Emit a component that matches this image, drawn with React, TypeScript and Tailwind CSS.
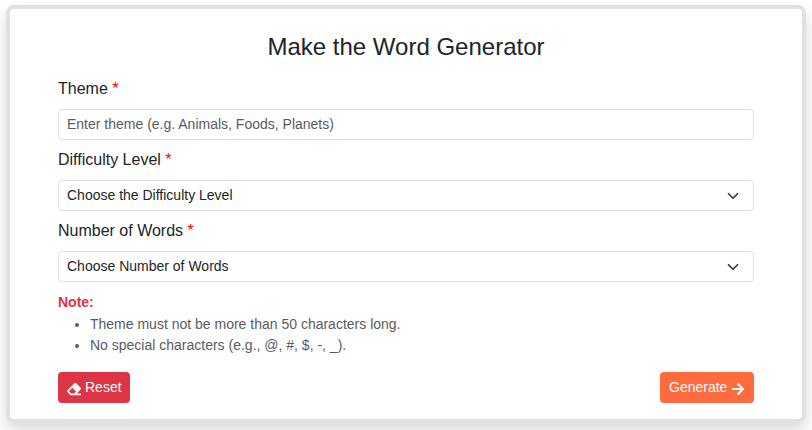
import { FaArrowRight, FaEraser } from "react-icons/fa";

function Label({ children }: { children: string }) {
  return (
    <label className="mb-2 block text-[16px] leading-6">
      {children} <span className="text-[#ff0000]">*</span>
    </label>
  );
}

function Select({ text }: { text: string }) {
  return (
    <div className="mb-2 flex h-[31px] items-center justify-between rounded-[4px] border border-[#dee2e6] pr-3 pl-2 text-[14px]">
      <span>{text}</span>
      <svg className="h-3 w-4" viewBox="0 0 16 16" fill="none">
        <path d="m2 5 6 6 6-6" stroke="#343a40" strokeWidth="2.3" strokeLinecap="round" strokeLinejoin="round" />
      </svg>
    </div>
  );
}

export default function App() {
  return (
    <div className="h-[430px] overflow-hidden bg-white px-[6px] pt-[5px] font-['Liberation_Sans',Arial,sans-serif] text-[#212529]">
      <div className="h-[418px] rounded-[8px] border-4 border-[#dee2e6] px-12 pt-[22px] shadow-[0_8px_16px_rgba(0,0,0,0.15)]">
        <h1 className="mb-[15px] text-center text-[24px] leading-[31px]">Make the Word Generator</h1>
        <Label>Theme</Label>
        <input
          className="mb-2 block h-[31px] w-full rounded-[4px] border border-[#dee2e6] px-2 pb-px text-[14px] placeholder:text-[#595c5f]"
          placeholder="Enter theme (e.g. Animals, Foods, Planets)"
        />
        <Label>Difficulty Level</Label>
        <Select text="Choose the Difficulty Level" />
        <Label>Number of Words</Label>
        <Select text="Choose Number of Words" />
        <div className="pt-0.5 text-[14px] leading-[21px] text-[#595c5f]">
          <b className="mb-px block text-[#dc3545]">Note:</b>
          <ul className="mb-4 list-disc pl-8">
            <li>Theme must not be more than 50 characters long.</li>
            <li>No special characters (e.g., @, #, $, -, _).</li>
          </ul>
        </div>
        <div className="flex justify-between text-[14px] leading-[21px] text-white">
          <button className="flex h-[31px] w-[72px] items-center gap-1 rounded-[4px] bg-[#dc3545] pl-[9px]">
            <FaEraser className="mt-[3px] size-[14px] shrink-0" /> Reset
          </button>
          <button className="flex h-[31px] w-[94px] items-center gap-[5px] rounded-[4px] bg-[#ff6b3d] pl-[9px]">
            Generate <FaArrowRight className="mt-[3px] h-[14px] w-[12.25px] shrink-0" />
          </button>
        </div>
      </div>
    </div>
  );
}
